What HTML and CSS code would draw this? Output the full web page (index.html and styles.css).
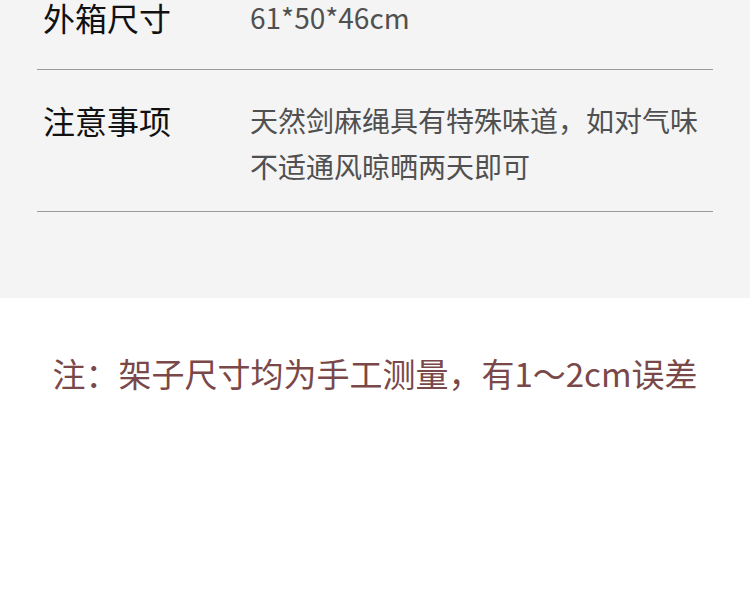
FILE: index.html
```html
<!DOCTYPE html>
<html lang="zh-CN">
<head>
  <meta charset="UTF-8" />
  <meta name="viewport" content="width=device-width, initial-scale=1.0"/>
  <title>产品参数</title>
  <link rel="stylesheet" href="styles.css">
</head>
<body>
  <div class="specs">
    <div class="row">
      <div class="label">外箱尺寸</div>
      <div class="value">61*50*46cm</div>
    </div>
    <div class="row">
      <div class="label">注意事项</div>
      <div class="value">天然剑麻绳具有特殊味道，如对气味<br>不适通风晾晒两天即可</div>
    </div>
  </div>

  <p class="note">注：架子尺寸均为手工测量，有1～2cm误差</p>
</body>
</html>
```

FILE: styles.css
```css
body {
  font-family: "Noto Sans CJK SC", "Noto Sans", sans-serif;
  margin: 0;
  background-color: #fff;
}
.specs {
  background-color: #f4f4f4;
  margin-top: -33px;
  padding: 0 37px 86px;
}
.row {
  display: grid;
  grid-template-columns: 213px 1fr;
  padding: 27px 0;
  border-bottom: 1px solid #9a9a9a;
}
.row:first-child {
  padding-bottom: 29px;
}
.row:last-child {
  padding-bottom: 22px;
}
.label {
  padding-left: 6px;
  font-size: 32px;
  line-height: 46px;
  color: #111;
}
.value {
  font-size: 28px;
  line-height: 46px;
  color: #505050;
}
.note {
  margin: 52px 0 0;
  text-align: center;
  font-size: 33px;
  line-height: 46px;
  color: #7a4848;
}
```
